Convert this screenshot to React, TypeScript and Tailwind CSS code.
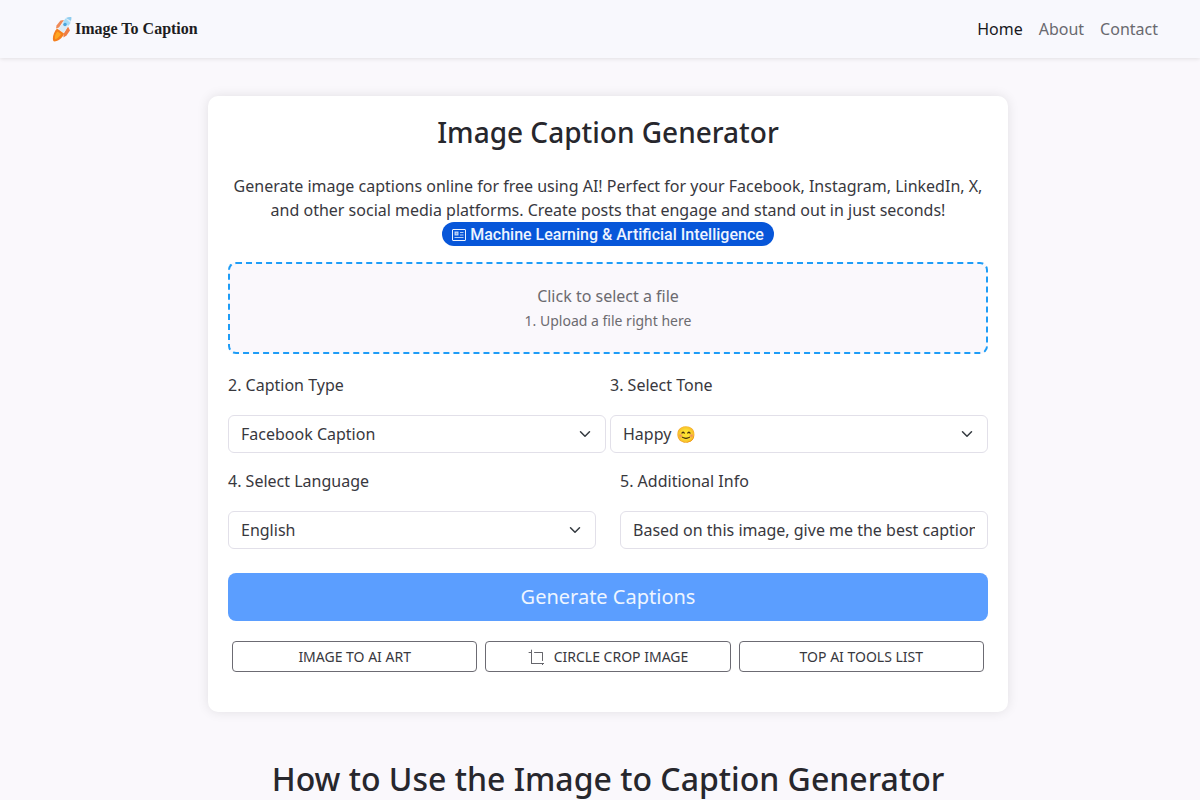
import { useRef, useState } from 'react';
import type { ReactNode } from 'react';
import { BsCrop } from 'react-icons/bs';

const navLinks = [
  { label: 'Home', href: '#home', active: true },
  { label: 'About', href: '#about', active: false },
  { label: 'Contact', href: '#contact', active: false },
];

const captionTypes = ['Facebook Caption', 'Instagram Caption', 'LinkedIn Caption', 'X Caption'];
const tones = ['Happy 😊', 'Funny 😂', 'Serious 😐', 'Romantic 😍'];
const languages = ['English', 'Spanish', 'French', 'German'];

const RocketLogo = () => (
  <svg viewBox="0 0 20 26" className="h-[26px] w-5" aria-hidden="true">
    <path d="M4.5 9.5 8.500 4.500 12 4l-5 7.500-3 1z" fill="#ef8a58" />
    <path d="m11.500 18 4.500-7.500 2 4-3.500 5-3 2z" fill="#ef7d45" />
    <path d="M14 2c2-1 4-1.300 5.300-1 .3 2 0 4-1.300 6.500l-6.500 9.500-5-4z" fill="#dcebf5" />
    <path d="M14 2c2-1 4-1.300 5.300-1 .2 1.300 0 2.500-.4 3.800z" fill="#8fcdf0" />
    <path d="M13.500 2.500 11 6l5.500 3.800L18.500 7z" fill="#a5dcf7" />
    <circle cx="13" cy="8.500" r="1.800" fill="#4aa5dc" />
    <path d="M5 12.500 12 17.500c-1 3-3.500 7-9.500 8C-.3 25.500.5 17 5 12.500z" fill="#f47f1e" />
    <path d="M5.500 15.500 9 18c-1 2-3 4.500-6 5.300-.5-3 .5-6 2.500-7.800z" fill="#ffa722" />
  </svg>
);

const NewsIcon = () => (
  <svg viewBox="0 0 14 12" className="h-3 w-[14px]" fill="none" stroke="currentColor" aria-hidden="true">
    <rect x="0.5" y="0.5" width="13" height="11" rx="0.5" />
    <rect x="3" y="3" width="3" height="3" fill="currentColor" fillOpacity="0.5" strokeOpacity="0.8" />
    <path d="M8 3.500h3.500M8 6h3.500M2.500 8.500h9" strokeOpacity="0.75" />
  </svg>
);

const Chevron = () => (
  <svg
    viewBox="0 0 16 16"
    className="pointer-events-none absolute right-[13px] top-[11px] h-4 w-4"
    fill="none"
    stroke="#343a40"
    strokeWidth="2"
    strokeLinecap="round"
    strokeLinejoin="round"
    aria-hidden="true"
  >
    <path d="m2 5 6 6 6-6" transform="translate(2 2) scale(.75)" />
  </svg>
);

const Field = ({ id, label, children }: { id: string; label: string; children: ReactNode }) => (
  <div className="min-w-0 flex-1">
    <label htmlFor={id} className="mb-[18px] block">{label}</label>
    {children}
  </div>
);

const SelectBox = ({ id, options }: { id: string; options: string[] }) => (
  <div className="relative">
    <select
      id={id}
      className="h-[38px] w-full appearance-none rounded-md border border-[#e2e0e9] bg-white pl-3 pr-9"
    >
      {options.map((option) => (
        <option key={option}>{option}</option>
      ))}
    </select>
    <Chevron />
  </div>
);

const toolClass =
  'flex h-[31px] flex-1 items-center justify-center gap-[10px] rounded border border-[#6c6b73] text-sm hover:bg-gray-100';

const App = () => {
  const fileRef = useRef<HTMLInputElement>(null);
  const [fileName, setFileName] = useState('');
  const [info, setInfo] = useState('Based on this image, give me the best caption');

  return (
    <div className="min-h-screen bg-[#faf8fc] font-['Noto_Sans',sans-serif] text-base text-[#38383e]">
      <header className="bg-[#f8f8fd] shadow-[0_1px_4px_rgba(0,0,0,0.1)]">
        <nav className="flex h-[58px] items-center justify-between pl-[52px] pr-[42px]">
          <a
            href="#home"
            className="flex items-center gap-[3px] font-['Liberation_Serif',serif] text-base font-bold text-[#1d1d22]"
          >
            <RocketLogo />
            Image To Caption
          </a>
          <ul className="flex gap-4">
            {navLinks.map((link) => (
              <li key={link.label}>
                <a href={link.href} className={link.active ? 'text-[#19191e]' : 'text-[#69696f]'}>
                  {link.label}
                </a>
              </li>
            ))}
          </ul>
        </nav>
      </header>

      <main className="flex flex-col items-center pl-4 pt-[38px]">
        <section className="w-full max-w-[800px] rounded-[10px] bg-white px-5 pb-10 pt-5 shadow-[0_0_12px_rgba(0,0,0,0.1)]">
          <h1 className="mb-[26px] text-center text-[28px] font-medium leading-8 text-[#27272d]">
            Image Caption Generator
          </h1>
          <p className="text-center">
            Generate image captions online for free using AI! Perfect for your Facebook, Instagram, LinkedIn, X,
            and other social media platforms. Create posts that engage and stand out in just seconds!
          </p>
          <div className="mb-4 flex justify-center">
            <a
              href="#machine-learning"
              className="flex h-6 items-center gap-1 rounded-full bg-[#0756d9] px-[10px] pt-0.5 font-['Roboto',sans-serif] font-medium text-[#eef4ff]"
            >
              <NewsIcon />
              Machine Learning &amp; Artificial Intelligence
            </a>
          </div>

          <button
            type="button"
            onClick={() => fileRef.current?.click()}
            className="block w-full rounded-lg border-2 border-dashed border-[#1e9df7] bg-[#faf8fc] px-5 pb-[18px] pt-5 text-[#6c6b70]"
          >
            <span className="block leading-6">{fileName || 'Click to select a file'}</span>
            <span className="block text-sm leading-[26px]">1. Upload a file right here</span>
          </button>
          <input
            ref={fileRef}
            type="file"
            accept="image/*"
            aria-label="Upload a file"
            className="hidden"
            onChange={(e) => setFileName(e.target.files?.[0]?.name ?? '')}
          />

          <form onSubmit={(e) => e.preventDefault()}>
            <div className="mt-[19px] flex gap-1">
              <Field id="caption-type" label="2. Caption Type">
                <SelectBox id="caption-type" options={captionTypes} />
              </Field>
              <Field id="tone" label="3. Select Tone">
                <SelectBox id="tone" options={tones} />
              </Field>
            </div>
            <div className="mt-4 flex gap-6">
              <Field id="language" label="4. Select Language">
                <SelectBox id="language" options={languages} />
              </Field>
              <Field id="info" label="5. Additional Info">
                <input
                  id="info"
                  type="text"
                  value={info}
                  onChange={(e) => setInfo(e.target.value)}
                  className="h-[38px] w-full rounded-md border border-[#e2e0e9] bg-white px-3"
                />
              </Field>
            </div>
            <button
              type="submit"
              className="mt-6 h-12 w-full rounded-lg bg-[#5b9eff] text-xl text-[#eef5ff] hover:bg-[#448ffb]"
            >
              Generate Captions
            </button>
          </form>

          <div className="mx-1 mt-5 flex gap-2">
            <a href="#ai-art" className={toolClass}>IMAGE TO AI ART</a>
            <a href="#circle-crop" className={toolClass}>
              <BsCrop className="h-4 w-4 text-[#66666c]" />
              CIRCLE CROP IMAGE
            </a>
            <a href="#ai-tools" className={toolClass}>TOP AI TOOLS LIST</a>
          </div>
        </section>

        <h2 className="mt-12 text-center text-[32px] font-medium leading-[38px] text-[#27272d]">
          How to Use the Image to Caption Generator
        </h2>
      </main>
    </div>
  );
};

export default App;
